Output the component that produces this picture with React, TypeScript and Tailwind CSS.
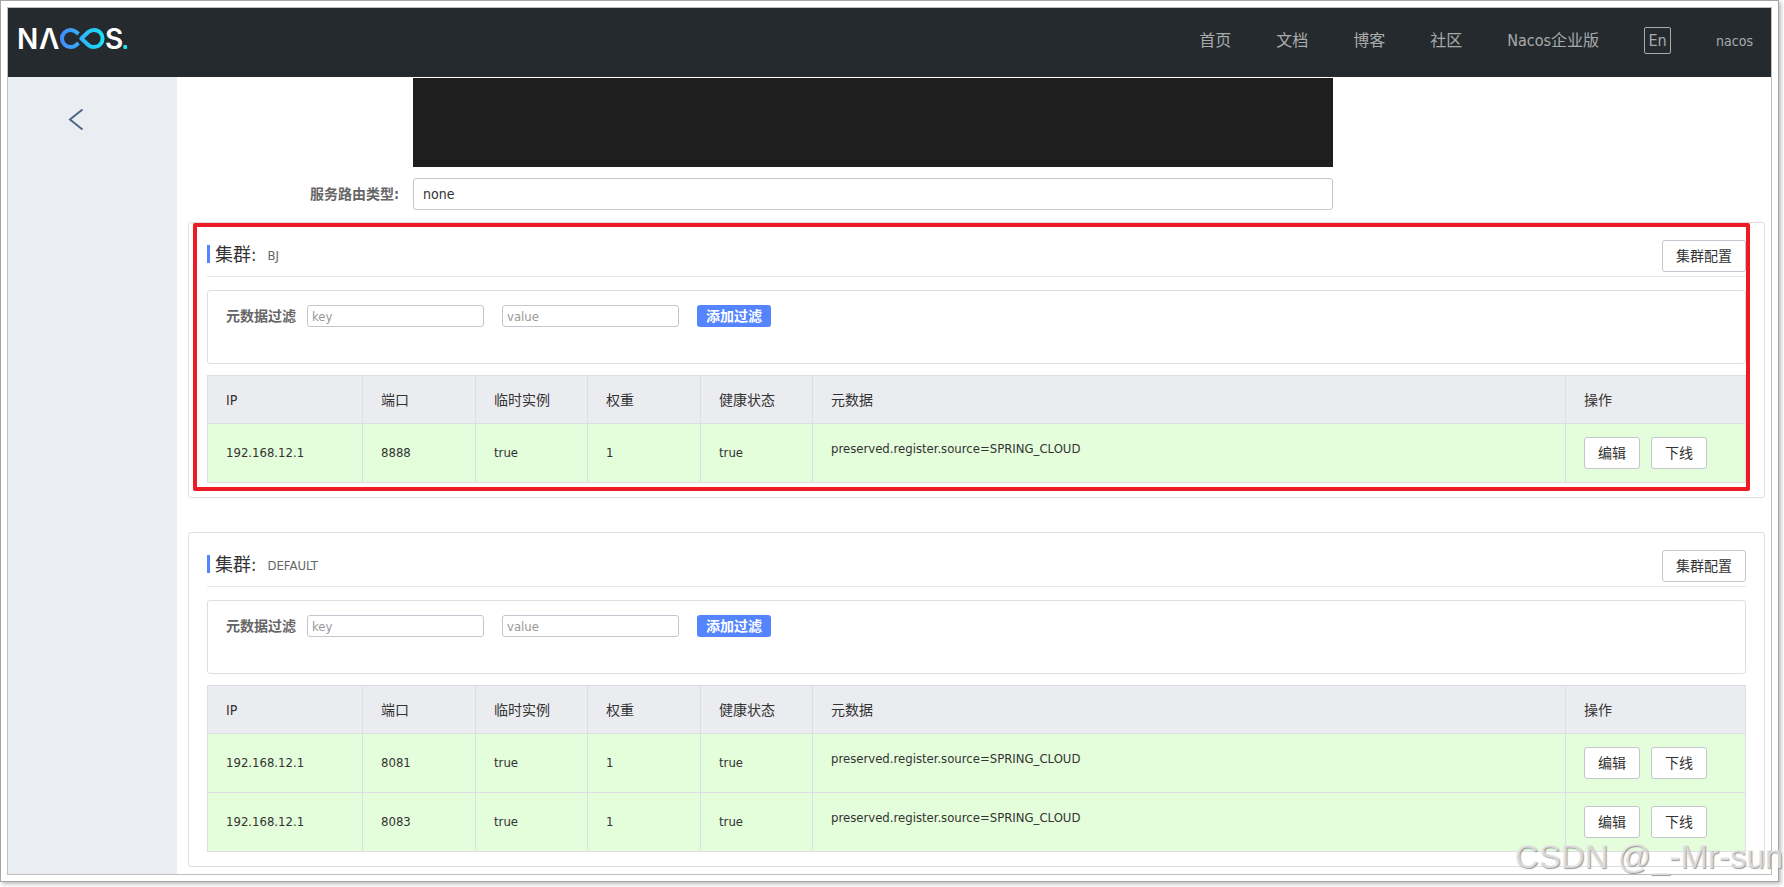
import { ReactNode } from "react";

const navLinks = ["首页", "文档", "博客", "社区", "Nacos企业版"];

const columns = [
  { title: "IP", width: "w-[155px]" },
  { title: "端口", width: "w-[113px]" },
  { title: "临时实例", width: "w-[112px]" },
  { title: "权重", width: "w-[113px]" },
  { title: "健康状态", width: "w-[112px]" },
  { title: "元数据", width: "" },
  { title: "操作", width: "w-[180px]" },
];

interface Instance {
  ip: string;
  port: number;
  ephemeral: boolean;
  weight: number;
  healthy: boolean;
  metadata: string;
}

interface Cluster {
  name: string;
  highlighted: boolean;
  instances: Instance[];
}

function createInstance(port: number): Instance {
  return {
    ip: "192.168.12.1",
    port,
    ephemeral: true,
    weight: 1,
    healthy: true,
    metadata: "preserved.register.source=SPRING_CLOUD",
  };
}

const clusters: Cluster[] = [
  { name: "BJ", highlighted: true, instances: [createInstance(8888)] },
  {
    name: "DEFAULT",
    highlighted: false,
    instances: [createInstance(8081), createInstance(8083)],
  },
];

function Logo() {
  return (
    <svg width="116" height="44" viewBox="-4 -10 116 44" aria-label="NACOS">
      <defs>
        <linearGradient
          id="loop"
          gradientUnits="userSpaceOnUse"
          x1="41"
          y1="0"
          x2="86"
          y2="0"
        >
          <stop offset="0" stopColor="#4489ff" />
          <stop offset="1" stopColor="#18e4f5" />
        </linearGradient>
      </defs>
      <g
        fill="#fff"
        fontFamily='Inter, "Liberation Sans", sans-serif'
        fontSize="28"
        fontWeight="600"
      >
        <text x="-2" y="22">
          N
        </text>
        <text x="20" y="22">
          Λ
        </text>
        <text x="86" y="22">
          S
        </text>
      </g>
      <g fill="none" stroke="url(#loop)" strokeWidth="4">
        <path d="M59.5 7 L57.2 5 A8.6 8.6 0 1 0 57.2 18 L59.5 16" />
        <path
          strokeLinejoin="round"
          d="M62.3 11.5 L69.3 5 Q71.500 2.900 75 2.900 A8.600 8.600 0 0 1 75 20.100 Q71.500 20.100 69.300 18 Z"
        />
      </g>
      <rect x="104.300" y="18" width="3.800" height="4" rx="1" fill="#1de6f7" />
    </svg>
  );
}

function Header() {
  return (
    <header className="flex h-[69px] items-start justify-between bg-[#252a2f] pr-[18px] pl-[7px]">
      <a href="#" className="mt-[9px]">
        <Logo />
      </a>
      <nav className="mt-[19px] flex h-[27px] items-center gap-[45px] text-base text-[#a8aaac]">
        {navLinks.map((link) => (
          <a key={link} href="#">
            {link}
          </a>
        ))}
        <button
          type="button"
          className="flex h-[27px] w-[27px] items-center justify-center rounded-xs border border-[#a8aaac] leading-none"
        >
          En
        </button>
        <a href="#" className="text-sm">
          nacos
        </a>
      </nav>
    </header>
  );
}

function OutlineButton({ children }: { children: ReactNode }) {
  return (
    <button
      type="button"
      className="h-8 rounded-[3px] border border-[#c4c6cf] bg-white px-[13px] text-sm text-[#333]"
    >
      {children}
    </button>
  );
}

function MetadataFilter({ id }: { id: string }) {
  const inputClass =
    "h-[22px] w-[177px] rounded-[3px] border border-[#c4c6cf] bg-white px-1 text-[13px] text-[#333] outline-none placeholder:text-[#999]";

  return (
    <div className="mt-[13px] flex h-[74px] items-start rounded-[3px] border border-[#dcdee3] px-[18px] pt-[14px]">
      <label
        htmlFor={`${id}-key`}
        className="mr-[11px] text-sm leading-[22px] font-bold text-[#666]"
      >
        元数据过滤
      </label>
      <div className="flex gap-[18px]">
        <input id={`${id}-key`} placeholder="key" className={inputClass} />
        <input
          aria-label="value"
          placeholder="value"
          className={inputClass}
        />
        <button
          type="button"
          className="h-[22px] rounded-[3px] bg-[#5584ff] px-[9px] text-sm font-bold text-white"
        >
          添加过滤
        </button>
      </div>
    </div>
  );
}

function InstanceTable({ instances }: { instances: Instance[] }) {
  const cellClass = "border-r border-b border-[#dcdee3] px-[18px]";

  return (
    <table className="mt-[11px] w-full table-fixed border-separate border-spacing-0 border-t border-l border-[#dcdee3] text-[13px] text-[#333]">
      <thead>
        <tr className="h-12 bg-[#ebecf0] text-left text-sm">
          {columns.map(({ title, width }) => (
            <th
              key={title}
              className={`${cellClass} ${width} font-normal`}
            >
              {title}
            </th>
          ))}
        </tr>
      </thead>
      <tbody>
        {instances.map((instance) => (
          <tr key={instance.port} className="h-[59px] bg-[#e4fdda]">
            <td className={cellClass}>{instance.ip}</td>
            <td className={cellClass}>{instance.port}</td>
            <td className={cellClass}>{String(instance.ephemeral)}</td>
            <td className={cellClass}>{instance.weight}</td>
            <td className={cellClass}>{String(instance.healthy)}</td>
            <td className={cellClass}>
              <p className="mb-2">{instance.metadata}</p>
            </td>
            <td className={cellClass}>
              <div className="flex gap-[11px]">
                <OutlineButton>编辑</OutlineButton>
                <OutlineButton>下线</OutlineButton>
              </div>
            </td>
          </tr>
        ))}
      </tbody>
    </table>
  );
}

function ClusterCard({ cluster }: { cluster: Cluster }) {
  return (
    <section className="relative rounded-[3px] border border-[#dcdee3] px-[18px] pb-[14px]">
      <div className="flex h-[54px] items-start justify-between border-b border-[#e6e7eb] pt-[17px]">
        <h2 className="mt-[5px] flex h-[18px] items-center text-lg leading-[18px] text-[#333]">
          <span className="mr-[5px] h-[18px] w-[3px] bg-[#5584ff]" />
          <span className="pt-[2px]">集群:</span>
          <span className="ml-[11px] pt-[3px] text-[13px] text-[#666]">
            {cluster.name}
          </span>
        </h2>
        <OutlineButton>集群配置</OutlineButton>
      </div>
      <MetadataFilter id={cluster.name} />
      <InstanceTable instances={cluster.instances} />
      {cluster.highlighted && (
        <div className="pointer-events-none absolute top-0 right-[14px] bottom-[6px] left-1 rounded-xs border-4 border-[#ed1c24]" />
      )}
    </section>
  );
}

export default function App() {
  return (
    <div className="relative flex min-h-screen overflow-hidden bg-white pr-[5px] pb-[5px] font-['DejaVu_Sans_Condensed','Noto_Sans_CJK_SC',sans-serif]">
      <div className="flex flex-1 border border-[#a5a5a5] p-[6px] shadow-[2px_2px_4px_#bbb]">
        <div className="flex flex-1 flex-col border border-[#bfbfbf]">
          <Header />
          <div className="flex flex-1">
            <aside className="w-[169px] shrink-0 bg-[#eaedf1]">
              <button
                type="button"
                aria-label="返回"
                className="mt-8 ml-[60px] block"
              >
                <svg width="16" height="21" viewBox="0 0 16 21" fill="none">
                  <path
                    d="M14.500 0.500 L2 10.500 L14.500 20.500"
                    stroke="#4f6787"
                    strokeWidth="2"
                  />
                </svg>
              </button>
            </aside>
            <main className="min-w-0 flex-1 pt-px">
              <div className="mb-3 grid grid-cols-[236fr_920fr_438fr] gap-y-[11px]">
                <div className="col-start-2 h-[89px] bg-[#1e1e1e]" />
                <label
                  htmlFor="selector"
                  className="col-start-1 pr-[14px] text-right text-sm leading-8 font-bold text-[#666]"
                >
                  服务路由类型:
                </label>
                <input
                  id="selector"
                  defaultValue="none"
                  className="h-8 rounded-[3px] border border-[#c4c6cf] px-[9px] text-sm text-[#333] outline-none"
                />
              </div>
              <div className="flex flex-col gap-[34px] pr-[6px] pb-[6px] pl-[11px]">
                {clusters.map((cluster) => (
                  <ClusterCard key={cluster.name} cluster={cluster} />
                ))}
              </div>
            </main>
          </div>
        </div>
      </div>
      <div className="pointer-events-none absolute right-px bottom-[12px] font-['Liberation_Sans',sans-serif] text-[33px] leading-9 text-[#e8e8e8]/80 [text-shadow:1px_1px_1px_#999]">
        CSDN @_-Mr-sun
      </div>
    </div>
  );
}
